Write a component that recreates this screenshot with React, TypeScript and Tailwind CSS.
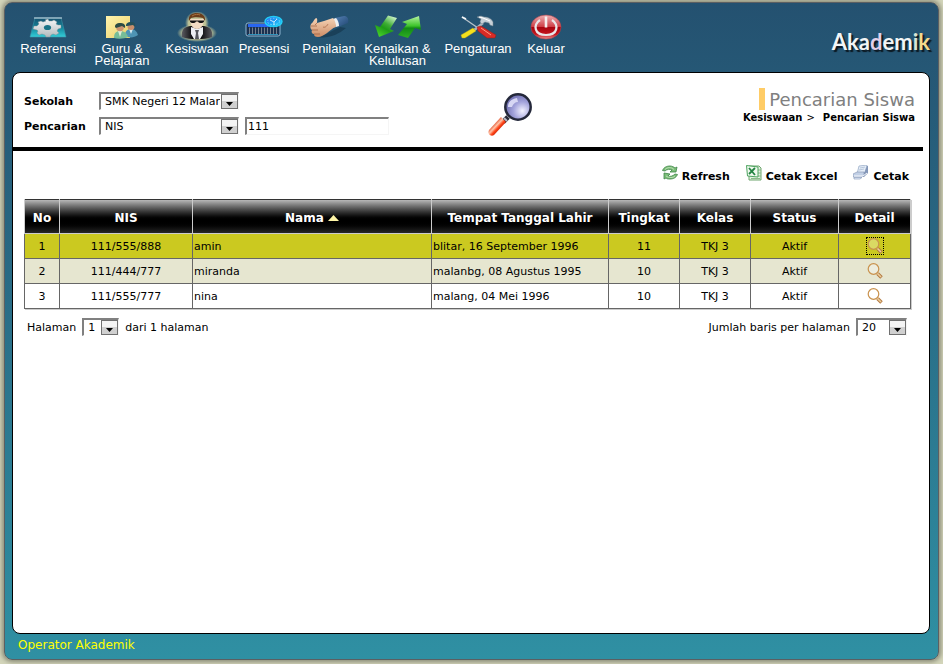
import React from "react";

type IconProps = { className?: string };

const ReferensiIcon = () => (
  <svg width="38" height="24" viewBox="0 0 38 24" aria-hidden="true">
    <defs>
      <linearGradient id="refBg" x1="0" y1="0" x2="0" y2="1">
        <stop offset="0" stopColor="#18506e" />
        <stop offset="0.5" stopColor="#12859b" />
        <stop offset="1" stopColor="#35cdd8" />
      </linearGradient>
      <linearGradient id="gear" x1="0" y1="0" x2="0" y2="1">
        <stop offset="0" stopColor="#f4f6f7" />
        <stop offset="1" stopColor="#b3b9bd" />
      </linearGradient>
    </defs>
    <path d="M6 3h26l5 19H1z" fill="url(#refBg)" stroke="#3c94a8" strokeWidth="0.6" />
    <path d="M5 3h28" stroke="#b9cfdb" strokeWidth="1.2" />
    <path
      d="m16 5 3-1 1 2 3 0 2-1 3 2-1 2 2 1 3 0 0 3-3 1-1 2 2 2-3 2-3-1-2 1-1 2-4 0-1-2-3-1-3 1-2-2 1-2-1-1-4-1 1-3 3 0 2-2-1-2 3-1 2 1 3-1z"
      fill="url(#gear)"
      stroke="#7d8d95"
      strokeWidth="0.4"
    />
    <ellipse cx="18.500" cy="12.500" rx="3.600" ry="2.600" fill="#197387" />
  </svg>
);

const GuruIcon = () => (
  <svg width="34" height="24" viewBox="0 0 34 24" aria-hidden="true">
    <defs>
      <linearGradient id="note" x1="0" y1="0" x2="1" y2="1">
        <stop offset="0" stopColor="#fff3ae" />
        <stop offset="1" stopColor="#ebcf68" />
      </linearGradient>
    </defs>
    <path d="M1 1h24v22H1z" fill="url(#note)" />
    <path d="M20 21c0-5 2-7 6-7s6 3 7 6c-4 3-9 3-13 1z" fill="#4e94b5" />
    <path d="m24 14 2 5 2-5z" fill="#d7e9ee" />
    <circle cx="26" cy="11.500" r="3.500" fill="#c98f6c" />
    <path d="M21 11c0-3 2-4 5-4s5 1 4 5l-2-2-6 1z" fill="#24505a" />
    <path d="M9 23c0-5 2-7 6-7s7 2 8 6c-4 2-10 2-14 1z" fill="#76bd98" />
    <path d="m13 16 2 6 2-6z" fill="#ddebd7" />
    <circle cx="15" cy="12.500" r="3.800" fill="#cc9470" />
    <path d="M10 12c0-3 2-4 5-4s6 1 5 5l-3-2-6 2z" fill="#2c4b45" />
  </svg>
);

const KesiswaanIcon = () => (
  <svg width="40" height="30" viewBox="0 0 40 30" aria-hidden="true">
    <defs>
      <radialGradient id="aura">
        <stop offset="0.7" stopColor="#e6dfa0" stopOpacity="0.8" />
        <stop offset="1" stopColor="#e6dfa0" stopOpacity="0" />
      </radialGradient>
      <linearGradient id="suit" x1="0" y1="0" x2="1" y2="0">
        <stop offset="0" stopColor="#5a5a60" />
        <stop offset="0.35" stopColor="#0d0d10" />
        <stop offset="0.65" stopColor="#0d0d10" />
        <stop offset="1" stopColor="#5a5a60" />
      </linearGradient>
    </defs>
    <ellipse cx="20" cy="11" rx="12" ry="12" fill="url(#aura)" />
    <ellipse cx="20" cy="21" rx="20" ry="9" fill="url(#aura)" />
    <path d="M5 25c-1-7 2-10 8-11h14c6 1 9 4 8 11-7 3-23 3-30 0z" fill="url(#suit)" />
    <path d="m14 15 6 2 6-2 0 7-3 5h-6l-3-5z" fill="#eceef2" />
    <path d="m18 18 4 0-1 3 1 6h-4l1-6z" fill="#54565c" />
    <path d="M13 7h14c0 6-3 10-7 10s-7-4-7-10z" fill="#f3dcc4" />
    <path d="M12 9c-1-6 3-8 8-8 5 0 9 3 8 8l-2-3c-4-1-9-1-12 0z" fill="#6a3d1b" />
    <path d="M15 4c3-2 6-2 8-1" stroke="#a9713e" strokeWidth="1" fill="none" />
    <path d="M13 8.500h14v1c-1 2-5 2-6 0h-2c-1 2-5 2-6 0z" fill="#111" />
  </svg>
);

const PresensiIcon = () => (
  <svg width="38" height="24" viewBox="0 0 38 24" aria-hidden="true">
    <defs>
      <linearGradient id="clock" x1="0" y1="0" x2="1" y2="1">
        <stop offset="0" stopColor="#2f62f0" />
        <stop offset="0.5" stopColor="#1c9df5" />
        <stop offset="1" stopColor="#2bdcf8" />
      </linearGradient>
    </defs>
    <rect x="1" y="8" width="34" height="13" rx="2" fill="#1b3150" stroke="#8eb6d2" />
    <path d="M3 9h22l4 3H3z" fill="#2866f0" />
    <path d="M4 16h28" stroke="#74808e" strokeWidth="7" strokeDasharray="1 2" />
    <path d="M3 19.500h30" stroke="#34a8d4" strokeWidth="0.8" />
    <ellipse cx="28.500" cy="6.500" rx="8.500" ry="5" fill="url(#clock)" stroke="#23cdf5" strokeWidth="1.500" />
    <ellipse cx="28.500" cy="6.500" rx="6" ry="3.200" fill="none" stroke="#8ee6fa" strokeWidth="0.8" strokeDasharray="1.500 1.500" />
    <path d="m25 5 4 2 3-3M29 7v3" stroke="#d8f0fa" fill="none" strokeWidth="0.9" />
  </svg>
);

const PenilaianIcon = () => (
  <svg width="40" height="24" viewBox="0 0 40 24" aria-hidden="true">
    <defs>
      <linearGradient id="skin" x1="0" y1="0" x2="0" y2="1">
        <stop offset="0" stopColor="#f6d3b5" />
        <stop offset="1" stopColor="#cc8c66" />
      </linearGradient>
      <linearGradient id="sleeve" x1="0" y1="0" x2="1" y2="1">
        <stop offset="0" stopColor="#5681b5" />
        <stop offset="1" stopColor="#1f4671" />
      </linearGradient>
    </defs>
    <path d="M9 22c9 2 20-2 28-9l-6-1-14 7z" fill="#1a4059" />
    <path d="m26 3 9-2c3 0 5 2 4 7l-10 4z" fill="url(#sleeve)" />
    <path d="m24 4 3-1c2 2 3 5 3 8l-3 1z" fill="#eef1f3" />
    <path d="M2 9c2-1 3-5 5-6 2 0 1 4 1 5l7-2 9-3c2 2 3 6 3 9-4 1-6 4-9 6-3 2-6 4-9 4-3 0-4-1-4-3-2 0-3-2-2-4-2-1-2-4-1-6z" fill="url(#skin)" />
    <path d="M2 11h6M3 15h6M5 19h6M8 8l-2 2M14 12c2 1 4-1 5-3" stroke="#9d5c3b" fill="none" strokeWidth="0.7" />
  </svg>
);

const KenaikanIcon = () => (
  <svg width="46" height="24" viewBox="0 0 46 24" aria-hidden="true">
    <defs>
      <linearGradient id="leafDown" x1="0.800" y1="0" x2="0.200" y2="1">
        <stop offset="0" stopColor="#d3f5cc" />
        <stop offset="0.4" stopColor="#3fae35" />
        <stop offset="0.6" stopColor="#1f9c18" />
        <stop offset="1" stopColor="#49d42a" />
      </linearGradient>
      <linearGradient id="leafUp" x1="0" y1="0" x2="0" y2="1">
        <stop offset="0" stopColor="#b5f2a0" />
        <stop offset="0.45" stopColor="#3dc52a" />
        <stop offset="0.55" stopColor="#128a15" />
        <stop offset="1" stopColor="#2fae22" />
      </linearGradient>
    </defs>
    <path d="M13 0.500 22 3l-7 11 4 2-15 6-4-12 5 2z" fill="url(#leafDown)" />
    <path d="M44 1 27 7l5 2-9 11 10 3 7-10 6 2z" fill="url(#leafUp)" />
  </svg>
);

const PengaturanIcon = () => (
  <svg width="38" height="24" viewBox="0 0 38 24" aria-hidden="true">
    <path d="m24 8-10 8" stroke="#aab6bf" strokeWidth="2.500" />
    <path d="m3 2 16 11" stroke="#b9c4cc" strokeWidth="1.300" />
    <path d="m3 2 4 2" stroke="#f4f6f8" strokeWidth="1.800" />
    <path d="m14 13-12 7 1 3 3 0 11-7z" fill="#f5e01c" stroke="#b8a416" strokeWidth="0.4" />
    <path d="m18 12 4-1 15 9-1 3-8 0-9-7z" fill="#d92b26" stroke="#8c201d" strokeWidth="0.5" />
    <path d="m22 13 10 7" stroke="#ff9b83" strokeWidth="1" />
    <path d="m18 2 4-1 3 1c4 0 8 2 9 5l0 4-3-1-1-2-4-1-3 2-2-2 1-3z" fill="#c6d0d8" stroke="#74848f" strokeWidth="0.5" />
    <path d="m20 2 4 1 7 3" stroke="#fff" fill="none" strokeWidth="1" />
  </svg>
);

const KeluarIcon = () => (
  <svg width="32" height="26" viewBox="0 0 32 26" aria-hidden="true">
    <defs>
      <linearGradient id="power" x1="0" y1="0" x2="0" y2="1">
        <stop offset="0" stopColor="#eeb0b3" />
        <stop offset="0.48" stopColor="#cf4048" />
        <stop offset="0.52" stopColor="#a80510" />
        <stop offset="0.8" stopColor="#c4141d" />
        <stop offset="1" stopColor="#ec8f90" />
      </linearGradient>
    </defs>
    <ellipse cx="16" cy="13" rx="15" ry="12" fill="url(#power)" stroke="#b0444b" strokeWidth="0.600" />
    <path d="M10 6c-7 5-6 15 6 15s13-10 6-15" stroke="#e9e6e8" strokeWidth="2.200" fill="none" />
    <path d="M16 2.500v11" stroke="#f4eeee" strokeWidth="2.600" />
  </svg>
);

const BigMagnifier = () => (
  <svg width="46" height="46" viewBox="0 0 46 46" aria-hidden="true">
    <defs>
      <radialGradient id="lens" cx="0.67" cy="0.65" r="0.7">
        <stop offset="0" stopColor="#f2f2ff" />
        <stop offset="0.5" stopColor="#a4a4dc" />
        <stop offset="1" stopColor="#6c6cae" />
      </radialGradient>
      <linearGradient id="handle" x1="0.300" y1="0.300" x2="0.700" y2="0.700">
        <stop offset="0" stopColor="#d93510" />
        <stop offset="0.4" stopColor="#ffc4a8" />
        <stop offset="0.65" stopColor="#ff4518" />
        <stop offset="1" stopColor="#bc1b02" />
      </linearGradient>
    </defs>
    <path d="m16 30 5-5" stroke="#282a37" strokeWidth="5" />
    <path d="m17 26 3 3" stroke="#b5b8c6" strokeWidth="2" />
    <path d="m14 25 5 5L7 43c-3 2-7-1-5-5z" fill="url(#handle)" />
    <circle cx="31" cy="15" r="12.700" fill="url(#lens)" stroke="#24283a" strokeWidth="2.500" />
    <path d="M21 15c0-5 3-8 9-9l1 4c-3 0-5 2-6 5z" fill="#d7d7f4" />
  </svg>
);

const RefreshIcon = () => (
  <svg width="16" height="16" viewBox="0 0 16 16" aria-hidden="true">
    <path d="M0.500 5.500C2 2 5 1 8 1c2 0 4 1 5 2l2-1-1 5H8l2-2C8 4 5 4 3 6z" fill="#7bbd78" stroke="#3f8547" strokeWidth="0.8" />
    <path d="M15.500 9.500C14 13 11 14 8 14c-2 0-3 0-4-1l-2 1 0-6 6 1-2 2c2 1 5 0 7-2z" fill="#7bbd78" stroke="#3f8547" strokeWidth="0.8" />
    <path d="M3 4.500c2-2 6-3 9 0M13 11c-2 2-6 2-9 0" stroke="#cae8c2" strokeWidth="0.800" fill="none" />
  </svg>
);

const ExcelIcon = () => (
  <svg width="16" height="16" viewBox="0 0 16 16" aria-hidden="true">
    <path d="M3 1h10l2 2v12H3z" fill="#e4f1e2" stroke="#6ea56e" />
    <path d="M12 5h3M12 8h3M12 11h3M5 13.500h9" stroke="#8abb89" />
    <path d="M0.500 0.500 12 2v10L1.500 11z" fill="#f2faf0" stroke="#4da45f" />
    <path d="m3 3 6 7M9 3l-6 6" stroke="#248343" strokeWidth="1.800" />
  </svg>
);

const PrintIcon = () => (
  <svg width="16" height="16" viewBox="0 0 16 16" aria-hidden="true">
    <path d="m6 1 8-1-2 8-8 1z" fill="#e5edf8" stroke="#9caec9" strokeWidth="0.8" />
    <path d="m7 3 5-1M6 5l5-1" stroke="#a4b6cf" strokeWidth="0.7" />
    <path d="m12 6 2-5 1 0v7l-4 4H9z" fill="#8396b8" />
    <path d="m0 9 4-2h7l0 3-2 2H0z" fill="#c2d0e6" stroke="#7f91b0" strokeWidth="0.600" />
    <path d="M1 11h9l4-3" stroke="#f7f9fd" fill="none" />
    <path d="M1 12.500h8l-2 1.500H1z" fill="#e5edfb" stroke="#8093b5" strokeWidth="0.6" />
  </svg>
);

const DetailIcon = () => (
  <svg width="16" height="16" viewBox="0 0 16 16" aria-hidden="true">
    <circle cx="6.500" cy="6" r="5.300" fill="#fff" fillOpacity="0.300" stroke="#c9924d" strokeWidth="1.200" />
    <path d="m10.500 10.500 4 4" stroke="#b27841" strokeWidth="3.600" />
    <path d="m10.500 10.500 3.500 3.500" stroke="#edcf9a" strokeWidth="1.600" />
  </svg>
);

const menu = [
  { label: "Referensi", Icon: ReferensiIcon },
  { label: "Guru & Pelajaran", Icon: GuruIcon },
  { label: "Kesiswaan", Icon: KesiswaanIcon },
  { label: "Presensi", Icon: PresensiIcon },
  { label: "Penilaian", Icon: PenilaianIcon },
  { label: "Kenaikan & Kelulusan", Icon: KenaikanIcon },
  { label: "Pengaturan", Icon: PengaturanIcon },
  { label: "Keluar", Icon: KeluarIcon },
];

const students = [
  { nis: "111/555/888", name: "amin", born: "blitar, 16 September 1996", level: 11, bg: "bg-[#cbc920]" },
  { nis: "111/444/777", name: "miranda", born: "malanbg, 08 Agustus 1995", level: 10, bg: "bg-[#e6e6d0]" },
  { nis: "111/555/777", name: "nina", born: "malang, 04 Mei 1996", level: 10, bg: "bg-white" },
];

const fieldFrame = "border-t-2 border-l-2 border-r border-b border-t-[#808080] border-l-[#808080] border-r-[#f5f5f5] border-b-[#f5f5f5]";

function Dropdown({ id, value, className }: IconProps & { id: string; value: string }) {
  return (
    <span className={`relative inline-block h-[18px] ${fieldFrame} ${className}`}>
      <select id={id} defaultValue={value} className="block h-4 w-full appearance-none bg-white pl-1 pr-[18px] text-[11px] leading-4 outline-none">
        <option>{value}</option>
      </select>
      <span className="pointer-events-none absolute right-0 top-0 flex h-[15px] w-[17px] items-center justify-center border border-[#707070] bg-linear-to-b from-[#f4f4f4] from-50% to-[#d0d0d0] to-50%">
        <svg width="7" height="4" viewBox="0 0 7 4" className="mt-1" aria-hidden="true"><path d="M0 0h7L3.500 4z" fill="#000" /></svg>
      </span>
    </span>
  );
}

export default function App() {
  const head = "border-x border-b border-[#cccccc] p-0 pt-0.5 font-bold";
  const edge = "border border-[#666666] p-0";
  const cell = `${edge} pt-0.5`;
  return (
    <div className="flex min-h-screen flex-col bg-[#d3d5ba] px-1 pb-1 pt-[2px] font-['DejaVu_Sans',Verdana,sans-serif] text-[11px] leading-[14px] text-black">
      <div className="flex flex-1 flex-col rounded-lg border border-[#5c5f62] bg-linear-to-b from-[#245170] to-[#2f90a3] pl-[7px] pr-2 shadow-[0_0_4px_2px_#8b8c79]">
        <header className="flex h-[69px] shrink-0 items-start justify-between">
          <nav className="grid grid-cols-[70px_78px_72px_62px_68px_69px_92px_44px] pl-px pt-[7px] font-['Liberation_Sans',Arial,sans-serif] text-[13px] leading-3 text-white">
            {menu.map(({ label, Icon }) => (
              <a key={label} href="#" className="flex flex-col items-center text-center">
                <span className="flex h-[33px] items-center justify-center"><Icon /></span>
                <span>{label}</span>
              </a>
            ))}
          </nav>
          <h1 className="pt-[27px] font-['Lato',sans-serif] text-[22px] font-bold leading-6 text-[#f2f5f5] [text-shadow:2px_2px_1px_#0b1720]">
            Aka<span className="text-[#e2d0e9]">d</span>em<span className="text-[#dbe4d5]">i</span><span className="text-[#f4d98a]">k</span>
          </h1>
        </header>

        <main className="flex-1 rounded-lg border border-black bg-white">
          <section className="mr-1.5 flex h-[78px] items-start gap-[98px] border-b-4 border-black pl-[11px] pr-2">
            <form className="grid grid-cols-[75px_auto] gap-y-1.5 pt-[19px]">
              <label htmlFor="sekolah" className="pt-px font-bold leading-[18px]">Sekolah</label>
              <div className="flex items-start"><Dropdown id="sekolah" value="SMK Negeri 12 Malang" className="w-[140px]" /></div>
              <label htmlFor="pencarian" className="pt-px font-bold leading-[18px]">Pencarian</label>
              <div className="flex items-start gap-1.5">
                <Dropdown id="pencarian" value="NIS" className="w-[140px]" />
                <input aria-label="Kata kunci" defaultValue="111" className={`h-[18px] w-36 bg-white px-px outline-none ${fieldFrame}`} />
              </div>
            </form>
            <div className="pt-[19px]"><BigMagnifier /></div>
            <div className="ml-auto flex flex-col items-end pt-[15px]">
              <h2 className="h-[22px] border-l-[6px] border-[#ffcc66] pl-1 text-[18px] leading-6 text-[#808080]">Pencarian Siswa</h2>
              <p className="flex text-[10px] font-bold leading-[15px]">
                <a href="#">Kesiswaan</a><span className="px-1 font-normal">&gt;</span><span className="pl-1">Pencarian Siswa</span>
              </p>
            </div>
          </section>

          <section className="pl-[11px] pr-[18px]">
            <div className="flex h-12 items-start justify-end gap-4 pr-0.5 pt-[14px] font-bold">
              <a href="#" className="flex gap-1"><RefreshIcon /><span className="pt-[5px]">Refresh</span></a>
              <a href="#" className="flex gap-1"><ExcelIcon /><span className="pt-[5px]">Cetak Excel</span></a>
              <a href="#" className="flex gap-1"><PrintIcon /><span className="pt-[5px]">Cetak</span></a>
            </div>
            <table className="w-full table-fixed border-collapse border border-[#333333] text-center shadow-[1px_1px_0_#cccccc]">
              <colgroup>
                <col className="w-[35px]" /><col className="w-[133px]" /><col /><col className="w-[177px]" />
                <col className="w-[71px]" /><col className="w-[71px]" /><col className="w-[88px]" /><col className="w-[72px]" />
              </colgroup>
              <thead>
                <tr className="h-[34px] bg-linear-to-b from-[#b8b8b8] via-black via-60% to-[#2c2c2c] text-[12px] text-white">
                  <th className={head}>No</th>
                  <th className={head}>NIS</th>
                  <th className={head}>
                    Nama <svg width="11" height="6" viewBox="0 0 11 6" className="inline" aria-hidden="true"><path d="M5.500 0 11 6H0z" fill="#fff6a8" /></svg>
                  </th>
                  <th className={head}>Tempat Tanggal Lahir</th>
                  <th className={head}>Tingkat</th>
                  <th className={head}>Kelas</th>
                  <th className={head}>Status</th>
                  <th className={head}>Detail</th>
                </tr>
              </thead>
              <tbody>
                {students.map((s, i) => (
                  <tr key={s.nis} className={`h-[25px] ${s.bg}`}>
                    <td className={cell}>{i + 1}</td>
                    <td className={cell}>{s.nis}</td>
                    <td className={`${cell} text-left`}><span className="pl-px">{s.name}</span></td>
                    <td className={`${cell} text-left`}><span className="pl-px">{s.born}</span></td>
                    <td className={cell}>{s.level}</td>
                    <td className={cell}>TKJ 3</td>
                    <td className={cell}>Aktif</td>
                    <td className={edge}>
                      <button type="button" aria-label={`Detail ${s.name}`} className={`mx-auto block border border-dotted ${i === 0 ? "border-black" : "border-transparent"}`}>
                        <DetailIcon />
                      </button>
                    </td>
                  </tr>
                ))}
              </tbody>
            </table>
            <div className="flex justify-between pl-[3px] pr-1 pt-[9px] leading-[18px]">
              <div className="flex items-start gap-1.5">
                <label htmlFor="halaman" className="pt-px">Halaman</label>
                <Dropdown id="halaman" value="1" className="w-[37px]" />
                <span className="pt-px">dari 1 halaman</span>
              </div>
              <div className="flex items-start gap-1.5">
                <label htmlFor="baris" className="pt-px">Jumlah baris per halaman</label>
                <Dropdown id="baris" value="20" className="w-[51px]" />
              </div>
            </div>
          </section>
        </main>
        <footer className="h-[25px] shrink-0 pl-1.5 text-[12px] leading-[22px] text-[#ffff00]">Operator Akademik</footer>
      </div>
    </div>
  );
}
